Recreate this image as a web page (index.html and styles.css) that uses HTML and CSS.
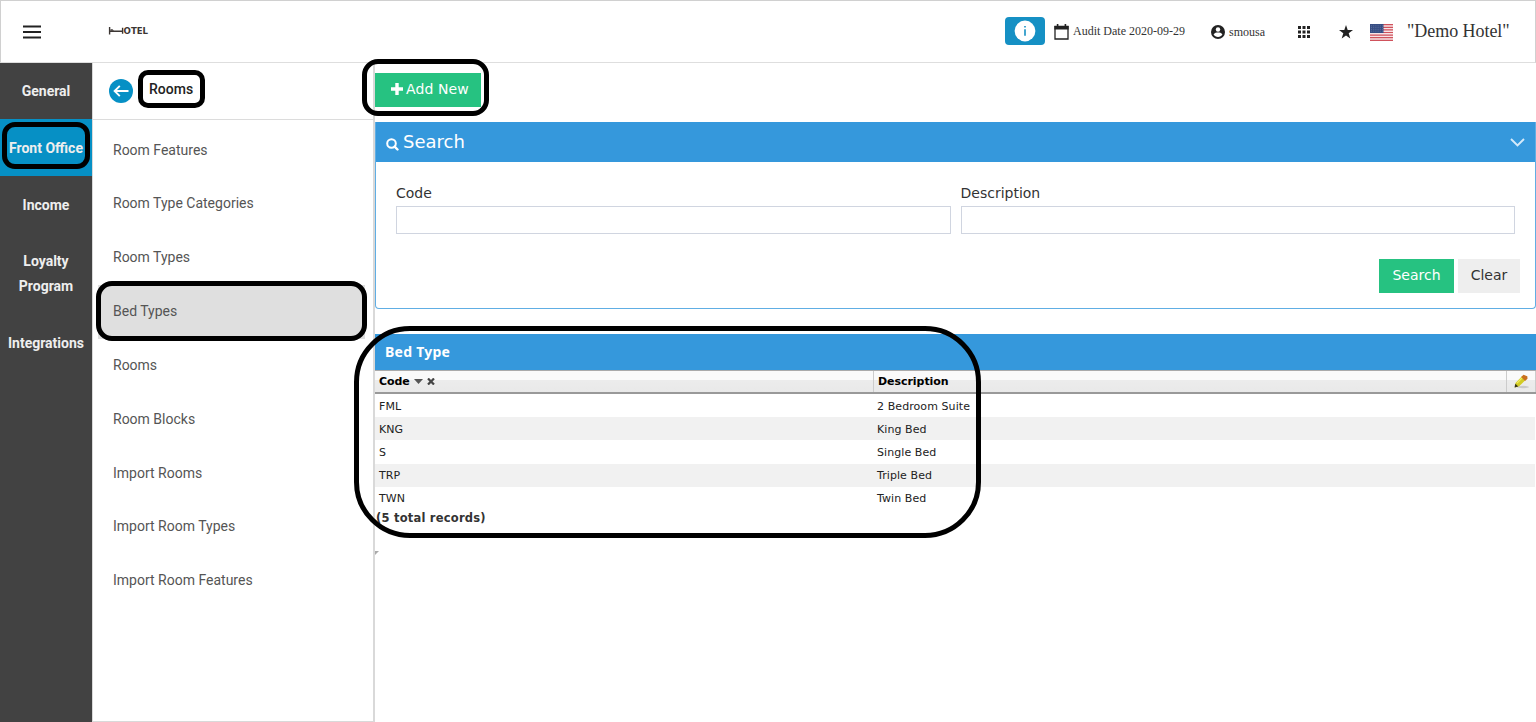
FILE: index.html
```
<!DOCTYPE html>
<html lang="en">
<head>
  <meta charset="UTF-8">
  <title>Bed Types</title>
  <link rel="stylesheet" href="styles.css">
</head>
<body>

  <header class="topbar">
    <svg class="menu-icon" width="18" height="14" viewBox="0 0 18 14"><path d="M0 1.500h18M0 7h18M0 12.500h18" stroke="#222" stroke-width="1.800"/></svg>
    <svg class="logo" width="42" height="12" viewBox="0 0 42 12">
      <path d="M1.600 2v7.500M1.600 6.300h13M14.600 2.800v6" stroke="#3c3633" stroke-width="1.400" fill="none"/>
      <path d="M2.500 4.200h2l1.500 1.600H2.500z" fill="#3c3633"/>
      <text x="15.600" y="8.900" textLength="24.500" lengthAdjust="spacingAndGlyphs" class="logo-text">OTEL</text>
    </svg>
    <div class="top-right">
      <button class="info-btn">
        <svg width="22" height="22" viewBox="0 0 22 22"><circle cx="11" cy="11" r="10.400" fill="#fff"/><path d="M10.200 9.200h1.600v6.600h-1.600zM10.200 5.900h1.600v1.600h-1.600z" fill="#1590c4"/></svg>
      </button>
      <svg class="cal" width="15" height="16" viewBox="0 0 15 16"><path d="M1 2.500h13V15H1z" fill="none" stroke="#222" stroke-width="1.300"/><path d="M.4 2h14.200v3.400H.4zM2.800 0h1.600v3H2.800zM10.600 0h1.600v3h-1.600z" fill="#222"/></svg>
      <span class="audit">Audit Date 2020-09-29</span>
      <svg class="user" width="14" height="14" viewBox="0 0 14 14"><circle cx="7" cy="7" r="7" fill="#222"/><circle cx="7" cy="4.500" r="2.200" fill="#fff"/><path d="M2.600 9.400C3.400 7.900 5.600 7.600 7 7.600s3.600.3 4.400 1.800C10.500 10.900 8.900 11.900 7 11.900s-3.500-1-4.400-2.500z" fill="#fff"/></svg>
      <span class="username">smousa</span>
      <svg class="apps" width="12" height="12" viewBox="0 0 12 12" fill="#222"><path d="M0 0h3v3H0zM4.500 0h3v3h-3zM9 0h3v3H9zM0 4.500h3v3H0zM4.500 4.500h3v3h-3zM9 4.500h3v3H9zM0 9h3v3H0zM4.500 9h3v3h-3zM9 9h3v3H9z"/></svg>
      <svg class="star" width="14" height="14" viewBox="0 0 14 14"><path d="M7 0l1.700 5H14L9.700 8.300 11.300 13.600 7 10.400 2.700 13.600 4.300 8.300 0 5h5.300z" fill="#222"/></svg>
      <svg class="flag" width="23" height="17" viewBox="0 0 23 17">
        <path d="M0 0h23v17H0z" fill="#f7e3e5"/>
        <path d="M0 .6h23M0 3.300h23M0 5.900h23M0 8.500h23M0 11.100h23M0 13.700h23M0 16.400h23" stroke="#d0525c" stroke-width="1.200"/>
        <path d="M0 0h13.500v9H0z" fill="#364d83"/>
        <path d="M1 1.800h12M1 3.600h12M1 5.400h12M1 7.200h12" stroke="#7484ad" stroke-width=".6" stroke-dasharray="1 1.200"/>
      </svg>
      <span class="hotel">"Demo Hotel"</span>
    </div>
  </header>

  <div class="page">
    <nav class="sidebar">
      <a class="first">General</a>
      <a class="active">Front Office</a>
      <a>Income</a>
      <a class="up">Loyalty Program</a>
      <a class="up">Integrations</a>
    </nav>

    <aside class="submenu">
      <div class="submenu-title">
        <svg width="24" height="24" viewBox="0 0 24 24"><circle cx="12" cy="12" r="12" fill="#0690c5"/><path d="M19.500 12H6M10.800 6.800L5.600 12l5.200 5.200" fill="none" stroke="#fff" stroke-width="1.900"/></svg>
        <span>Rooms</span>
      </div>
      <ul>
        <li>Room Features</li>
        <li>Room Type Categories</li>
        <li>Room Types</li>
        <li class="selected">Bed Types</li>
        <li>Rooms</li>
        <li>Room Blocks</li>
        <li>Import Rooms</li>
        <li>Import Room Types</li>
        <li>Import Room Features</li>
      </ul>
    </aside>

    <main class="content">
      <button class="btn green add-new">
        <svg width="12" height="12" viewBox="0 0 12 12"><path d="M6 0v12M0 6h12" stroke="#fff" stroke-width="3.400"/></svg>
        <span>Add New</span>
      </button>

      <section class="search-panel">
        <div class="search-head">
          <svg width="13" height="13" viewBox="0 0 13 13"><circle cx="5.500" cy="5.500" r="4.300" fill="none" stroke="#fff" stroke-width="2"/><path d="M8.600 8.600l2.900 2.900" stroke="#fff" stroke-width="2.400" stroke-linecap="round"/></svg>
          <h2>Search</h2>
          <svg class="chevron" width="15" height="9" viewBox="0 0 15 9"><path d="M1 1l6.500 6.500L14 1" fill="none" stroke="#d5eafa" stroke-width="1.900"/></svg>
        </div>
        <div class="fields">
          <label>Code<input type="text"></label>
          <label>Description<input type="text"></label>
        </div>
        <div class="actions">
          <button class="btn green">Search</button>
          <button class="btn grey">Clear</button>
        </div>
      </section>

      <section class="list">
        <h3>Bed Type</h3>
        <div class="row head">
          <span class="code">Code
            <svg width="9" height="5" viewBox="0 0 9 5"><path d="M0 0h9L4.500 5z" fill="#555"/></svg>
            <svg width="8" height="7" viewBox="0 0 8 7"><path d="M1 .5l6 6M7 .5l-6 6" stroke="#444" stroke-width="2.200"/></svg>
          </span>
          <span class="desc">Description</span>
          <span class="edit">
            <svg width="17" height="15" viewBox="0 0 17 15">
              <ellipse cx="10" cy="13" rx="6" ry="1.200" fill="#c9c9c9"/>
              <path d="M2.500 9L9 2.300l3.800 3.500L6.200 12.200 2 13.500z" fill="#d2cc25"/>
              <path d="M4 9.200L9.600 3.400" stroke="#f1ec62" stroke-width="1.200"/>
              <path d="M8.200 3L10.500.8l3.800 1.400.2 2.600L12 7z" fill="#c9701f"/>
              <path d="M2.300 9.800L5.300 12.400 1.500 13.600z" fill="#38351c"/>
            </svg>
          </span>
        </div>
        <div class="row"><span class="code">FML</span><span class="desc">2 Bedroom Suite</span></div>
        <div class="row odd"><span class="code">KNG</span><span class="desc">King Bed</span></div>
        <div class="row"><span class="code">S</span><span class="desc">Single Bed</span></div>
        <div class="row odd"><span class="code">TRP</span><span class="desc">Triple Bed</span></div>
        <div class="row"><span class="code">TWN</span><span class="desc">Twin Bed</span></div>
        <p class="total">(5 total records)</p>
        <svg class="corner" width="4" height="4" viewBox="0 0 4 4"><path d="M0 0h4L0 4z" fill="#aaa"/></svg>
      </section>
    </main>
  </div>

  <!-- highlight outlines over the page -->
  <div class="mark mark-rooms"></div>
  <div class="mark mark-office"></div>
  <div class="mark mark-add"></div>
  <div class="mark mark-bed"></div>
  <div class="mark mark-list"></div>

</body>
</html>
```
FILE: styles.css
```
* { box-sizing: border-box; }
body {
  margin: 0;
  height: 722px;
  display: flex;
  flex-direction: column;
  overflow: hidden;
  background: #fff;
  font-family: "DejaVu Sans", Verdana, sans-serif;
  color: #333;
}
svg { display: block; flex: none; }
button { border: 0; padding: 0; font-family: inherit; }

/* top bar */
.topbar {
  height: 63px;
  flex: none;
  display: flex;
  align-items: center;
  border: 1px solid #d0d0d0;
  border-bottom-color: #dedede;
  padding: 0 26px 0 22px;
}
.logo { margin: 0 0 2px 67px; }
.logo-text { font: bold 8px "DejaVu Sans", sans-serif; fill: #3c3633; }
.top-right {
  margin: 0 0 2px auto;
  display: flex;
  align-items: center;
  font-family: "Liberation Serif", serif;
  font-size: 12px;
}
.info-btn {
  width: 40px;
  height: 28px;
  border-radius: 4px;
  background: #1590c4;
  display: flex;
  align-items: center;
  justify-content: center;
}
.cal { margin: 2px 4px 0 9px; }
.audit { width: 138px; padding-top: 2px; white-space: nowrap; }
.user { margin: 3px 4px 0 0; }
.username { width: 69px; padding-top: 4px; }
.apps { margin-top: 2px; }
.star { margin: 3px 0 0 29px; }
.flag { margin: 3px 14px 0 17px; }
.hotel { font-size: 18px; width: 102px; padding-top: 2px; white-space: nowrap; letter-spacing: -.05px; }

.page { flex: 1; display: flex; min-height: 0; }

/* left navigation */
.sidebar {
  width: 92px;
  flex: none;
  background: #424242;
  font: bold 14px/25px Roboto, sans-serif;
  color: #eee;
  text-align: center;
}
.sidebar a { display: block; padding: 17px 5px 15px; }
.sidebar .first { padding-top: 16px; }
.sidebar .up { padding: 16px 5px; }
.sidebar .active { background: #0690c5; padding-left: 0; padding-right: 0; }

.submenu {
  width: 283px;
  flex: none;
  border: 1px solid #d9d9d9;
  border-width: 0 2px 1px 1px;
  font-family: Roboto, sans-serif;
}
.submenu-title {
  height: 57px;
  border-bottom: 1px solid #dcdcdc;
  display: flex;
  align-items: center;
  gap: 16px;
  padding-left: 16px;
  font-size: 14px;
  font-weight: 500;
  color: #222;
}
.submenu-title span { padding-bottom: 4px; }
.submenu ul { list-style: none; margin: 3.500px 8px 0 5px; padding: 0; }
.submenu li {
  height: 53.850px;
  line-height: 53.850px;
  padding-left: 15px;
  font-size: 14px;
  color: #555;
}
.submenu .selected { background: #dfdfdf; }

/* main area */
.content { flex: 1; min-width: 0; padding-top: 10px; }
.btn { height: 34px; font-size: 14px; }
.green { background: #26c281; color: #fff; }
.grey { background: #eee; color: #333; }
.add-new { display: flex; align-items: center; width: 106px; padding: 0 0 3px 16px; gap: 3px; letter-spacing: .1px; }

.search-panel {
  margin-top: 15px;
  height: 187px;
  border: 1px solid #60aee4;
  border-top: 0;
  border-radius: 0 0 4px 4px;
}
.search-head {
  height: 40px;
  background: #3598dc;
  color: #fff;
  display: flex;
  align-items: center;
  gap: 4px;
  padding: 0 10px;
}
.search-head svg { margin-top: 4px; }
.search-head h2 { margin: 0 0 2px; font-size: 18px; font-weight: normal; }
.search-head .chevron { margin: 0 0 0 auto; }
.fields { display: flex; gap: 10px; padding: 22px 20px 0; }
.fields label { flex: 1; font-size: 14px; line-height: 18px; }
.fields input {
  display: block;
  width: 100%;
  height: 28px;
  margin-top: 4px;
  border: 1px solid #d0d5e0;
}
.actions { display: flex; justify-content: flex-end; gap: 4px; padding: 25px 15px 0; }
.actions .green { width: 75px; padding-bottom: 2px; }
.actions .grey { width: 62px; padding-bottom: 2px; }

.list { margin-top: 25px; font-size: 11px; color: #222; }
.list h3 {
  margin: 0;
  height: 36px;
  padding-left: 10px;
  background: #3598dc;
  color: #fff;
  font: bold 14px/36px "Noto Sans", sans-serif;
  letter-spacing: .25px;
}
.row { display: flex; align-items: center; height: 23.200px; margin-right: 1px; }
.row .code { width: 498px; padding-left: 4px; }
.row .desc { flex: 1; padding-left: 4px; }
.row:not(.head) span { padding-top: 1px; letter-spacing: .08px; }
.odd { background: #f1f1f1; }
.row.head {
  height: 24px;
  margin-right: 0;
  border-top: 1px solid #aaa;
  border-bottom: 2px solid #999;
  background: linear-gradient(#fafafa 45%, #ececec 45%, #e9e9e9);
  font-weight: bold;
  letter-spacing: -.05px;
  color: #000;
}
.head .code { display: flex; align-items: center; gap: 4px; }
.head .desc { border-left: 1px solid #ccc; line-height: 21px; }
.head .edit {
  width: 30px;
  height: 21px;
  border: 1px solid #ccc;
  border-width: 0 1px;
  padding: 3px 0 0 6px;
}
.total { margin: 0; padding-left: 1px; font-size: 11.500px; font-weight: bold; line-height: 16px; letter-spacing: .22px; color: #333; }
.corner { margin-top: 25px; }

/* outlines */
.mark { position: absolute; border: 5px solid #000; }
.mark-rooms { left: 138px; top: 70px; width: 67px; height: 38px; border-radius: 10px; }
.mark-office { left: 2px; top: 122px; width: 88px; height: 47px; border-radius: 13px; }
.mark-add { left: 362px; top: 59px; width: 127px; height: 57px; border-radius: 16px; }
.mark-bed { left: 96px; top: 281px; width: 271px; height: 60px; border-radius: 16px; }
.mark-list { left: 354px; top: 326px; width: 627px; height: 212px; border-radius: 56px; }
```
